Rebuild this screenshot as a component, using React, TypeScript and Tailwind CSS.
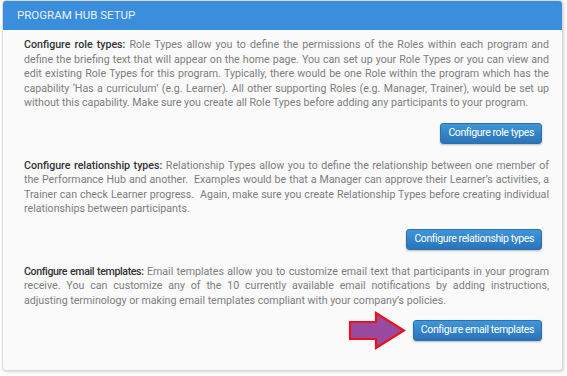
const sections = [
  {
    title: 'Configure role types:',
    titleClass: 'tracking-[0px]',
    body: ' Role Types allow you to define the permissions of the Roles within each program and define the briefing text that will appear on the home page. You can set up your Role Types or you can view and edit existing Role Types for this program. Typically, there would be one Role within the program which has the capability \u2018Has a curriculum\u2019 (e.g. Learner). All other supporting Roles (e.g. Manager, Trainer), would be set up without this capability. Make sure you create all Role Types before adding any participants to your program.',
    button: 'Configure role types',
  },
  {
    title: 'Configure relationship types:',
    titleClass: 'tracking-[0px]',
    body: ' Relationship Types allow you to define the relationship between one member of the Performance Hub and another.\u00a0 Examples would be that a Manager can approve their Learner\u2019s activities, a Trainer can check Learner progress.\u00a0 Again, make sure you create Relationship Types before creating individual relationships between participants.',
    button: 'Configure relationship types',
  },
  {
    title: 'Configure email templates:',
    titleClass: 'tracking-[-0.4px]',
    body: ' Email templates allow you to customize email text that participants in your program receive. You can customize any of the 10 currently available email notifications by adding instructions, adjusting terminology or making email templates compliant with your company\u2019s policies.',
    button: 'Configure email templates',
    arrow: true,
  },
];

function Arrow() {
  return (
    <svg
      width="58"
      height="40"
      viewBox="0 0 58 40"
      className="absolute right-full top-1/2 mr-[7px] -translate-y-1/2"
    >
      <path
        d="M2 11 L28 11 L28 2 L56 19.5 L28 37 L28 28 L2 28 Z"
        fill="#9a4a9f"
        stroke="#e8131c"
        strokeWidth="2.2"
        strokeLinejoin="miter"
      />
    </svg>
  );
}

export default function App() {
  return (
    <div className="min-h-[376px] bg-white px-[2px] pb-[3px] font-['Roboto',sans-serif]">
      <div className="w-[561px] rounded-[4px] border border-[#dcdcdc] bg-[#fafafa] shadow-[1px_1px_3px_rgba(0,0,0,0.18)]">
        <div className="flex h-[29px] items-center rounded-t-[3px] bg-[#3a8edc] px-[14px] text-[11.5px] text-[#e9f2fb]">
          PROGRAM HUB SETUP
        </div>
        <div className="pl-[21px] pr-[13px] pt-[8px] pb-[14px]">
          {sections.map((s) => (
            <div key={s.title} className="mb-[15px]">
              <p className="text-justify text-[10.65px] leading-[14.5px] text-[#7d7d7d]">
                <span className={`font-medium text-[#333] ${s.titleClass}`}>{s.title}</span>
                {s.body}
              </p>
              <div className="mt-[12px] flex justify-end pr-[7px]">
                <div className="relative flex">
                  {s.arrow && <Arrow />}
                  <button className="h-[21px] rounded-[3px] border border-[#2b6fae] bg-gradient-to-b from-[#3f96d8] to-[#2a74b8] px-[7px] text-[10.5px] leading-none tracking-[-0.4px] text-white shadow-[0_1px_2px_rgba(0,0,0,0.25)]">
                    {s.button}
                  </button>
                </div>
              </div>
            </div>
          ))}
        </div>
      </div>
    </div>
  );
}
